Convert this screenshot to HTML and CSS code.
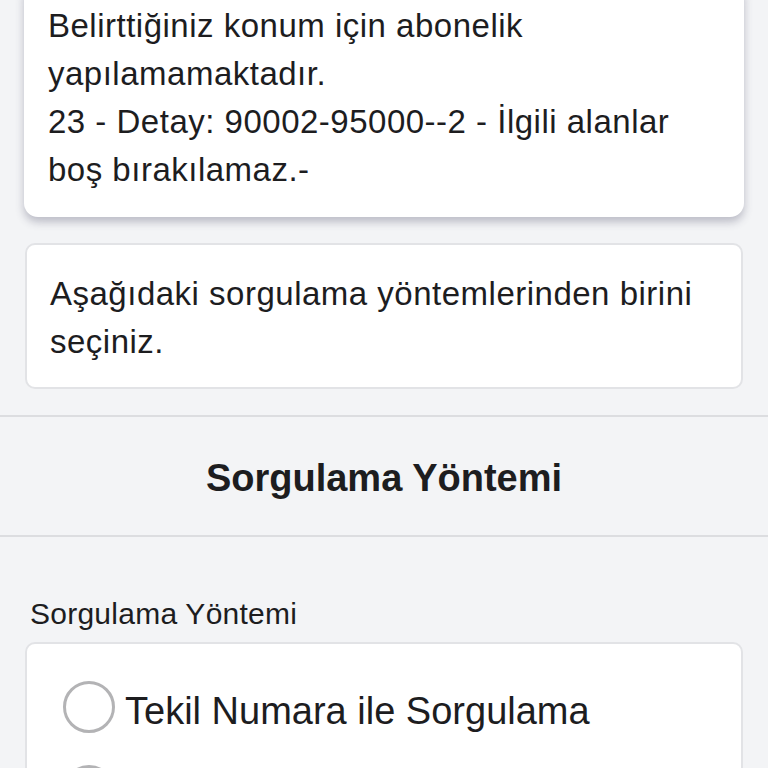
FILE: index.html
```html
<!DOCTYPE html>
<html lang="tr">
<head>
<meta charset="utf-8">
<link rel="stylesheet" href="styles.css">
</head>
<body>
<div class="page">
  <div class="card error-card">
    <p class="msg">Belirttiğiniz konum için abonelik yapılamamaktadır.<br>23 - Detay: 90002-95000--2 - İlgili alanlar boş bırakılamaz.-</p>
  </div>
  <div class="card info-card">
    <p class="msg">Aşağıdaki sorgulama yöntemlerinden birini seçiniz.</p>
  </div>
</div>
<div class="section-head">Sorgulama Yöntemi</div>
<div class="form">
  <div class="field-label">Sorgulama Yöntemi</div>
  <div class="card options">
    <label class="option"><span class="radio"></span><span class="opt-text">Tekil Numara ile Sorgulama</span></label>
    <label class="option"><span class="radio"></span><span class="opt-text">Adres ile Sorgulama</span></label>
  </div>
</div>
</body>
</html>
```
FILE: styles.css
```css
* { box-sizing: border-box; }
html, body { margin: 0; padding: 0; }
body {
  background: #f3f4f6;
  font-family: "Liberation Sans", Arial, sans-serif;
  color: #1d1d1f;
  width: 768px;
  height: 768px;
  overflow: hidden;
}
.page {
  padding: 0 24px 26px 24px;
  display: flex;
  flex-direction: column;
  gap: 26px;
  border-bottom: 2px solid #dcdde0;
}
.card {
  background: #fff;
  border-radius: 10px;
}
.error-card {
  margin-top: -18px;
  padding: 20px 24px 23px 24px;
  border-radius: 14px;
  box-shadow: 0 5px 8px rgba(60, 60, 90, 0.3);
}
.msg {
  margin: 0;
  font-size: 33px;
  line-height: 48px;
  letter-spacing: 0.5px;
}
.info-card {
  border: 2px solid #e2e3e6;
  padding: 25px 22px 21px 23px;
  margin: 0 1px;
}
.section-head {
  height: 120px;
  padding-top: 4px;
  display: flex;
  align-items: center;
  justify-content: center;
  font-weight: bold;
  font-size: 38px;
  border-bottom: 2px solid #dcdde0;
}
.form {
  padding: 60px 25px 0 25px;
}
.field-label {
  font-size: 30px;
  letter-spacing: 0.25px;
  padding-left: 5px;
  margin-bottom: 11px;
}
.options {
  border: 2px solid #e2e3e6;
  padding: 37px 36px 20px 36px;
  display: flex;
  flex-direction: column;
  gap: 32px;
}
.option {
  display: flex;
  align-items: center;
  gap: 10px;
}
.radio {
  width: 52px;
  height: 52px;
  border: 3.5px solid #b3b3b5;
  border-radius: 50%;
  flex: none;
}
.opt-text {
  font-size: 38px;
  padding-top: 8px;
}
```
